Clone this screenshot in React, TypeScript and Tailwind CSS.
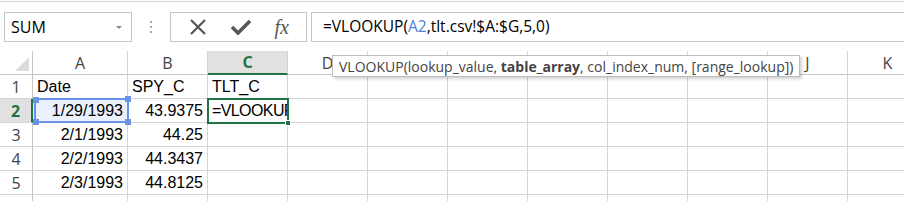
import React from "react"

const cols = [
  { l: "A", w: 95 },
  { l: "B", w: 80 },
  { l: "C", w: 80 },
  { l: "D", w: 80 },
  { l: "E", w: 80 },
  { l: "F", w: 80 },
  { l: "G", w: 80 },
  { l: "H", w: 80 },
  { l: "I", w: 80 },
  { l: "J", w: 80 },
  { l: "K", w: 80 },
]

const rows: string[][] = [
  ["Date", "SPY_C", "TLT_C"],
  ["1/29/1993", "43.9375", "=VLOOKUP"],
  ["2/1/1993", "44.25", ""],
  ["2/2/1993", "44.3437", ""],
  ["2/3/1993", "44.8125", ""],
  ["", "", ""],
]

const ui = { fontFamily: '"Open Sans", "Noto Sans", sans-serif' }
const cellFont = { fontFamily: '"Liberation Sans", Arial, sans-serif' }

function Handle({ cls }: { cls: string }) {
  return <span className={`absolute w-[6px] h-[6px] ${cls}`} />
}

export default function App() {
  return (
    <div className="relative w-[904px] h-[201px] overflow-hidden bg-white" style={ui}>
      {/* formula bar */}
      <div className="h-[2px] border-b border-[#d4d4d4]" />
      <div className="flex items-start h-[49px] pt-[10px] pl-[4px]">
        <div className="flex items-center justify-between w-[128px] h-[30px] border border-[#c6c6c6] pl-[6px] pr-[9px] text-[16px] text-black">
          <span>SUM</span>
          <span className="w-0 h-0 border-l-[3px] border-r-[3px] border-t-[3px] border-l-transparent border-r-transparent border-t-[#888]" />
        </div>
        <div className="flex flex-col gap-[3px] w-[38px] items-center pt-[9px]">
          <span className="w-[2px] h-[2px] bg-[#aaa]" />
          <span className="w-[2px] h-[2px] bg-[#aaa]" />
          <span className="w-[2px] h-[2px] bg-[#aaa]" />
        </div>
        <div className="flex items-center justify-around w-[137px] h-[30px] border border-[#c6c6c6] px-[6px]">
          <svg width="20" height="20" viewBox="0 0 20 20">
            <path d="M3 3 L17 17 M17 3 L3 17" stroke="#555" strokeWidth="2.2" fill="none" />
          </svg>
          <svg width="22" height="20" viewBox="0 0 22 20">
            <path d="M2 10 L8 16 L20 4" stroke="#555" strokeWidth="3.4" fill="none" />
          </svg>
          <span className="text-[20px] italic text-[#555] leading-none" style={{ fontFamily: '"Liberation Serif", serif' }}>
            fx
          </span>
        </div>
        <div className="ml-[4px] flex-1 h-[30px] border border-[#c6c6c6] border-r-0 pl-[11px] flex items-center text-[15.5px] text-black">
          <span>=VLOOKUP(</span>
          <span className="text-[#4d7fdc]">A2</span>
          <span>,tlt.csv!$A:$G,5,0)</span>
        </div>
      </div>

      {/* grid */}
      <div className="flex flex-col">
        <div className="flex h-[24px]">
          <div className="relative w-[33px] shrink-0 border-r border-b border-[#c6c6c6] bg-white">
            <svg className="absolute right-[3px] bottom-[3px]" width="14" height="14" viewBox="0 0 14 14">
              <path d="M14 0 L14 14 L0 14 Z" fill="#dcdcdc" />
            </svg>
          </div>
          {cols.map((c) => (
            <div
              key={c.l}
              style={{ width: c.w }}
              className={`shrink-0 flex items-center justify-center text-[16px] border-r border-[#d4d4d4] ${
                c.l === "C"
                  ? "bg-[#e1e1e1] text-[#217346] font-bold border-b-2 border-b-[#217346]"
                  : "text-[#444] border-b border-b-[#c6c6c6]"
              }`}
            >
              {c.l}
            </div>
          ))}
        </div>
        {rows.map((r, i) => {
          const n = i + 1
          const active = n === 2
          return (
            <div key={n} className="flex h-[24px]">
              <div
                className={`w-[33px] shrink-0 flex items-center justify-center text-[16px] border-b border-[#d4d4d4] ${
                  active
                    ? "bg-[#e1e1e1] text-[#217346] font-bold border-r-2 border-r-[#217346]"
                    : "text-[#444] border-r border-r-[#c6c6c6]"
                }`}
              >
                {n}
              </div>
              {cols.map((c, j) => {
                const v = r[j] ?? ""
                const num = n > 1 && j < 2
                const formula = active && j === 2
                return (
                  <div
                    key={c.l}
                    style={{ width: c.w, ...cellFont }}
                    className={`relative shrink-0 flex items-center overflow-hidden whitespace-nowrap border-r border-b border-[#d4d4d4] text-[16px] text-black ${
                      num ? "justify-end pr-[4px]" : "justify-start pl-[4px]"
                    } ${active && j === 0 ? "bg-[#eaf0fc]" : ""} ${formula ? "tracking-[-0.6px] pl-[3px]" : ""}`}
                  >
                    {v}
                  </div>
                )
              })}
            </div>
          )
        })}
      </div>

      {/* range reference highlight A2 */}
      <div className="absolute left-[34px] top-[98px] w-[95px] h-[25px] border-2 border-[#6a92e8] pointer-events-none">
        <Handle cls="-left-[3px] -top-[3px] bg-[#6a92e8]" />
        <Handle cls="-right-[4px] -top-[4px] bg-[#6a92e8]" />
        <Handle cls="-left-[3px] -bottom-[4px] bg-[#6a92e8]" />
        <Handle cls="-right-[4px] -bottom-[4px] bg-[#6a92e8]" />
      </div>

      {/* active cell C2 */}
      <div className="absolute left-[207px] top-[98px] w-[82px] h-[26px] border-2 border-[#217346] pointer-events-none">
        <Handle cls="-right-[4px] -bottom-[4px] bg-[#217346] border border-white" />
      </div>

      {/* function tooltip */}
      <div className="absolute left-[332px] top-[55px] h-[22px] px-[6px] flex items-center bg-white border border-[#bdbdbd] shadow-[2px_2px_3px_rgba(0,0,0,0.18)] text-[14px] text-[#444] whitespace-nowrap">
        <span>VLOOKUP(lookup_value,&nbsp;</span>
        <b className="font-bold">table_array</b>
        <span>, col_index_num, [range_lookup])</span>
      </div>
    </div>
  )
}
